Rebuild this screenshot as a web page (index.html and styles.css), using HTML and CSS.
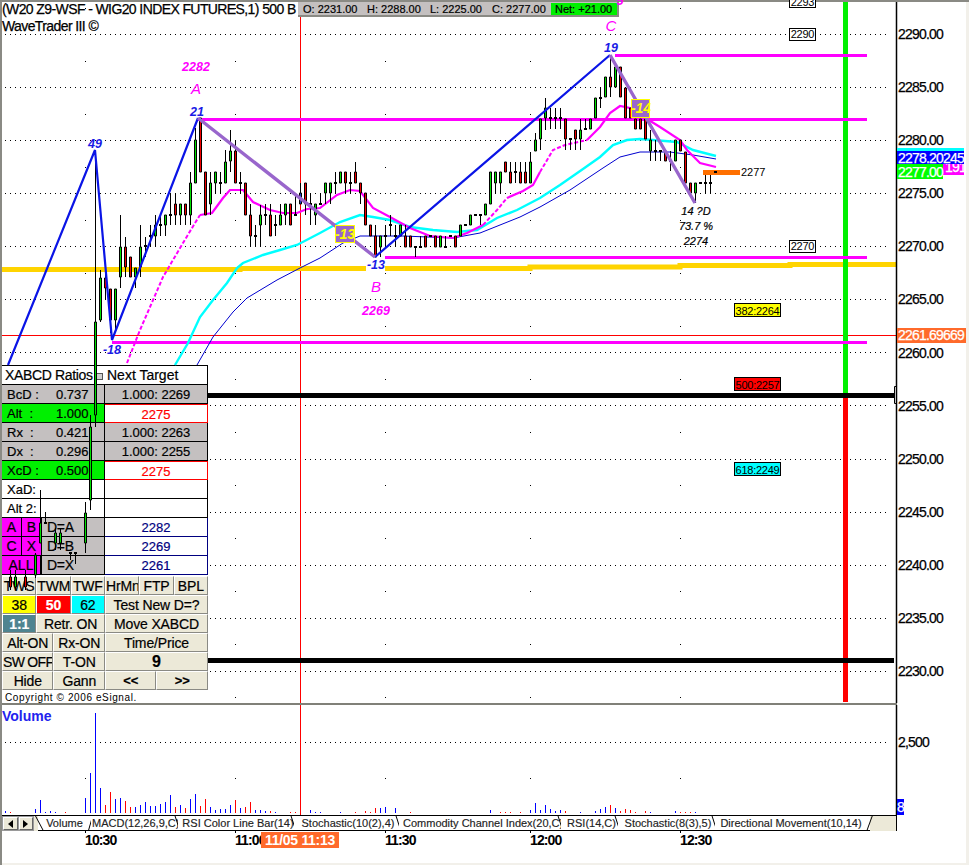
FILE: index.html
```html
<!DOCTYPE html>
<html lang="en">
<head>
<meta charset="utf-8">
<title>WaveTrader III</title>
<link rel="stylesheet" href="styles.css">
</head>
<body>
<div class="window">
  <section class="price-pane">
    <svg class="layer" width="969" height="703" viewBox="0 0 969 703">
      <path class="grid-h" d="M5 34.5H889M5 87.5H889M5 140.5H889M5 193.5H889M5 246.5H889M5 299.5H889M5 352.5H889M5 405.5H889M5 459.5H889M5 512.5H889M5 565.5H889M5 618.5H889M5 671.5H889"/>
      <path class="grid-v" d="M85.5 8V700M235.5 8V700M385.5 8V700M530.5 8V700M680.5 8V700"/>
      <path class="cross" d="M300.5 17V703M2 335.5H896"/>
      <path class="gold" d="M2 269.5H240V268.5H366M385 268.5H530V267H680V265.5H790V264.5H896"/>
      <rect class="bar-green" x="843" y="2" width="5" height="391"/>
      <rect class="bar-red" x="843" y="398" width="5" height="304"/>
      <path class="heavy" d="M208 395.5H894M208 660.5H894"/>
      <path class="bracket" d="M896 386.5H894.5V403.5H896"/>
      <path class="axis" d="M896.5 2V703"/>
    </svg>

    <div class="title">
      <div>(W20 Z9-WSF - WIG20 INDEX FUTURES,1) 500 B</div>
      <div>WaveTrader III ©</div>
    </div>

    <div class="ohlc">
      <span class="ohlc-o">O: 2231.00</span>
      <span class="ohlc-h">H: 2288.00</span>
      <span class="ohlc-l">L: 2225.00</span>
      <span class="ohlc-c">C: 2277.00</span>
      <span class="ohlc-net">Net: +21.00</span>
    </div>

    <div class="panel">
      <div class="panel-head"><span class="head-ratios">XABCD Ratios</span><span class="head-box"></span><span class="head-target">Next Target</span></div>
      <div class="ratio gray"><span class="rl">BcD :</span><span class="rv">0.737</span></div><div class="target gray">1.000: 2269</div>
      <div class="ratio green"><span class="rl">Alt&nbsp; :</span><span class="rv">1.000</span></div><div class="target alert">2275</div>
      <div class="ratio gray"><span class="rl">Rx&nbsp; :</span><span class="rv">0.421</span></div><div class="target gray">1.000: 2263</div>
      <div class="ratio gray"><span class="rl">Dx&nbsp; :</span><span class="rv">0.296</span></div><div class="target gray">1.000: 2255</div>
      <div class="ratio green"><span class="rl">XcD :</span><span class="rv">0.500</span></div><div class="target alert">2275</div>
      <div class="ratio"><span class="rl">XaD:</span></div><div class="target"></div>
      <div class="ratio"><span class="rl">Alt 2:</span></div><div class="target"></div>
      <div class="ratio point-row"><span class="pt">A</span><span class="pt">B</span><span class="pd">D=A</span></div><div class="target navy">2282</div>
      <div class="ratio point-row"><span class="pt">C</span><span class="pt">X</span><span class="pd">D=B</span></div><div class="target navy">2269</div>
      <div class="ratio point-row"><span class="pt pt-all">ALL</span><span class="pd">D=X</span></div><div class="target navy">2261</div>
      <div class="buttons">
        <button class="s2">TWS</button><button class="s2">TWM</button><button class="s2">TWF</button><button class="s2">HrMn</button><button class="s2">FTP</button><button class="s2">BPL</button>
        <button class="s2 yellow">38</button><button class="s2 red">50</button><button class="s2 cyan">62</button><button class="s6">Test New D=?</button>
        <button class="s2 teal">1:1</button><button class="s4">Retr. ON</button><button class="s6">Move XABCD</button>
        <button class="s3">Alt-ON</button><button class="s3">Rx-ON</button><button class="s6">Time/Price</button>
        <button class="s3 tight">SW OFF</button><button class="s3">T-ON</button><button class="s6 big">9</button>
        <button class="s3">Hide</button><button class="s3">Gann</button><button class="s3 nav">&lt;&lt;</button><button class="s3 nav">&gt;&gt;</button>
      </div>
      <div class="copyright">Copyright © 2006 eSignal.</div>
    </div>

    <svg class="layer layer-top" width="969" height="703" viewBox="0 0 969 703">
      <path class="mline" d="M615 55.5H867M198 119.5H867M385 257.5H867M112 342.5H867"/>
      <path class="ma-thin" d="M197 365L213 337L233 312L247 298L277 280L300 268L320 258L343 243L360 236L403 236L453 238L480 233L500 225L520 217L540 207L570 190L603 168L620 157L640 152L670 152L693 155L716 159"/>
      <path class="ma-cyan" d="M175 365L188 343L200 317L213 300L227 283L237 268L243 263L263 255L280 250L297 245L320 233L340 222L360 215L373 217L390 220L410 227L433 230L457 232L477 230L497 218L517 210L540 198L560 185L583 169L600 157L613 145L627 140L640 139L653 140L677 142L693 150L716 156"/>
      <path class="ma-dash" d="M127 363L140 330L163 277L183 243L195 223L200 215"/>
      <path class="ma-mag" d="M200 215L212 213L223 198L230 190L243 190L253 202L270 210L283 213L297 213L307 209L320 208L337 195L350 190L360 191L373 208L390 217L410 228L430 236L453 238L467 233L483 225"/>
      <path class="ma-dash" d="M483 225L497 210L507 198"/>
      <path class="ma-mag" d="M507 198L523 191L533 185L540 172"/>
      <path class="ma-dash" d="M540 172L553 150L565 145L587 140"/>
      <path class="ma-mag" d="M587 140L600 127L610 113L620 106L630 108L647 119L660 127L680 140L687 150L700 163L716 167"/>
      <path class="wick" d="M95.5 150V427M90.5 415V510M85.5 502V553M40.5 490V543M45.5 512V523M55.5 528V550M60.5 528V550M70.5 553V560M75.5 553V564M35.5 553V578M25.5 570V590M15.5 570V590M10.5 570V590M100.5 270V322M105.5 270V300M110.5 289V333M115.5 289V330M120.5 215V288M125.5 237V277M130.5 257V277M135.5 268V288M140.5 225V277M145.5 237V257M150.5 225V247M155.5 215V247M160.5 215V236M165.5 215V236M170.5 193V225M175.5 193V225M180.5 204V225M185.5 204V225M190.5 172V225M195.5 128V183M200.5 118V172M205.5 172V215M210.5 172V215M215.5 172V193M220.5 172V193M225.5 150V183M230.5 130V172M235.5 140V183M240.5 172V193M245.5 183V215M250.5 204V247M255.5 225V247M260.5 205V247M265.5 204V225M270.5 204V236M275.5 215V236M280.5 204V225M285.5 204V225M290.5 204V225M295.5 193V215M300.5 183V204M305.5 183V215M310.5 193V225M315.5 204V225M320.5 193V204M325.5 183V204M330.5 183V204M335.5 172V193M340.5 172V183M345.5 172V193M350.5 172V193M355.5 162V183M360.5 183V204M365.5 193V225M370.5 225V236M375.5 225V257M380.5 236V257M385.5 225V247M390.5 215V236M395.5 225V247M400.5 225V236M405.5 225V247M410.5 236V247M415.5 247V257M420.5 236V247M425.5 236V247M435.5 236V247M440.5 236V247M445.5 236V247M455.5 236V247M480.5 215V225M495.5 172V193M500.5 172V193M510.5 162V183M515.5 162V183M520.5 162V183M525.5 162V183M530.5 152V183M535.5 133V150M540.5 119V150M545.5 98V130M550.5 108V129M555.5 108V129M560.5 108V129M565.5 119V150M570.5 139V150M575.5 130V150M580.5 119V150M585.5 119V130M590.5 119V129M595.5 98V118M600.5 88V108M605.5 77V97M610.5 57V97M615.5 67V87M620.5 67V97M625.5 88V118M630.5 108V118M645.5 108V139M650.5 130V161M655.5 140V161M660.5 151V161M670.5 151V171M695.5 183V203M705.5 172V193M710.5 172V193"/>
      <path class="dash" d="M144 246H147M149 236H152M159 225H162M169 215H172M219 183H222M239 183H242M254 236H257M264 215H267M274 225H277M294 215H297M309 204H312M319 204H322M334 183H337M349 183H352M384 236H387M389 225H392M394 236H397M414 247H417M419 247H422M429 236H432M444 247H447M449 236H452M464 225H467M474 215H477M479 215H482M514 172H517M549 118H552M554 118H557M559 118H562M569 139H572M584 129H587M599 98H602M654 151H657M659 151H662M669 161H672M699 183H702M704 183H707M709 183H712M74 553H77M69 553H72M44 523H47"/>
      <path class="body-g" d="M94.500 322h2V415h-2zM89.500 427h2V500h-2zM84.500 513h2V543h-2zM59.500 533h2V543h-2zM54.500 533h2V543h-2zM39.500 523h2V543h-2zM34.500 555h2V575h-2zM14.500 577h2V587h-2zM99.500 278h2V320h-2zM114.500 289h2V320h-2zM119.500 247h2V277h-2zM134.500 268h2V277h-2zM139.500 247h2V267h-2zM154.500 225h2V236h-2zM164.500 215h2V225h-2zM179.500 204h2V215h-2zM189.500 183h2V215h-2zM194.500 140h2V183h-2zM209.500 183h2V204h-2zM214.500 172h2V183h-2zM224.500 162h2V183h-2zM229.500 151h2V161h-2zM259.500 215h2V225h-2zM279.500 215h2V225h-2zM284.500 204h2V215h-2zM314.500 204h2V215h-2zM324.500 183h2V193h-2zM329.500 183h2V193h-2zM339.500 172h2V183h-2zM379.500 236h2V247h-2zM399.500 225h2V236h-2zM439.500 236h2V247h-2zM459.500 225h2V236h-2zM469.500 215h2V225h-2zM484.500 204h2V215h-2zM489.500 172h2V204h-2zM494.500 172h2V183h-2zM499.500 172h2V183h-2zM529.500 162h2V183h-2zM534.500 140h2V151h-2zM539.500 119h2V139h-2zM544.500 108h2V118h-2zM579.500 130h2V139h-2zM589.500 119h2V129h-2zM594.500 98h2V118h-2zM604.500 77h2V97h-2zM614.500 67h2V87h-2zM649.500 140h2V151h-2zM674.500 140h2V161h-2zM694.500 183h2V193h-2z"/>
      <path class="body-r" d="M9.500 577h2V587h-2zM24.500 577h2V587h-2zM104.500 278h2V288h-2zM109.500 289h2V320h-2zM124.500 247h2V267h-2zM129.500 257h2V277h-2zM174.500 204h2V215h-2zM184.500 204h2V215h-2zM199.500 118h2V172h-2zM204.500 172h2V215h-2zM234.500 151h2V183h-2zM244.500 183h2V215h-2zM249.500 215h2V236h-2zM269.500 215h2V236h-2zM289.500 204h2V225h-2zM304.500 183h2V204h-2zM344.500 172h2V183h-2zM354.500 172h2V183h-2zM359.500 183h2V193h-2zM364.500 193h2V225h-2zM369.500 225h2V236h-2zM374.500 236h2V257h-2zM404.500 236h2V247h-2zM409.500 236h2V247h-2zM424.500 236h2V247h-2zM434.500 236h2V247h-2zM454.500 236h2V247h-2zM504.500 162h2V172h-2zM509.500 172h2V183h-2zM519.500 172h2V183h-2zM524.500 172h2V183h-2zM564.500 119h2V139h-2zM574.500 130h2V139h-2zM609.500 77h2V87h-2zM619.500 67h2V97h-2zM624.500 88h2V118h-2zM629.500 108h2V118h-2zM634.500 119h2V129h-2zM639.500 119h2V129h-2zM644.500 119h2V139h-2zM664.500 151h2V161h-2zM679.500 140h2V151h-2zM684.500 152h2V183h-2zM689.500 183h2V193h-2z"/>
      <path class="body-b" d="M299.500 193h2V204h-2z"/>
      <path class="zig-blue" d="M8 365L95 150L112 340L198 118M375 257L610 55"/>
      <path class="zig-purple" d="M198 118L375 257M610 55L695 203"/>
      <rect class="hit" x="335.500" y="225.500" width="19" height="17"/>
      <text class="hit-text" x="345" y="239">-13</text>
      <rect class="hit" x="631.500" y="99.500" width="18" height="18"/>
      <text class="hit-text" x="641" y="113">-14</text>
      <rect class="knock" x="366" y="261" width="19" height="15"/>
      <text class="pivot" x="95" y="148">49</text>
      <text class="pivot" x="197" y="116">21</text>
      <text class="pivot" x="112" y="354">-18</text>
      <text class="pivot" x="376" y="269">-13</text>
      <text class="pivot" x="611" y="52">19</text>
      <text class="pt-big" x="196" y="94">A</text>
      <text class="pt-val" x="196" y="71">2282</text>
      <text class="pt-big" x="376" y="292">B</text>
      <text class="pt-val" x="376" y="315">2269</text>
      <text class="pt-big" x="611" y="31">C</text>
      <text class="pt-val" x="620" y="5">5</text>
      <text class="note" x="696" y="215">14 ?D</text>
      <text class="note" x="696" y="230">73.7 %</text>
      <text class="note" x="696" y="245">2274</text>
      <rect class="cur-bar" x="703" y="170" width="37" height="5"/>
      <rect class="cur-tick" x="714" y="171" width="3" height="2"/>
      <text class="lab" x="741" y="176">2277</text>
      <rect class="tag" x="789.500" y="-4.500" width="26" height="12"/><text class="lab-c" x="802.500" y="6">2293</text>
      <rect class="tag" x="789.500" y="28.500" width="26" height="12"/><text class="lab-c" x="802.500" y="38">2290</text>
      <rect class="tag" x="789.500" y="240.500" width="26" height="12"/><text class="lab-c" x="802.500" y="250">2270</text>
      <rect class="tag tag-y" x="734.500" y="303.500" width="46" height="13"/><text class="lab-c" x="757.500" y="315">382:2264</text>
      <rect class="tag tag-r" x="734.500" y="377.500" width="46" height="13"/><text class="lab-c" x="757.500" y="389">500:2257</text>
      <rect class="tag tag-c" x="734.500" y="462.500" width="46" height="13"/><text class="lab-c" x="757.500" y="474">618:2249</text>
      <text class="ax" x="898" y="39">2290.00</text>
      <text class="ax" x="898" y="92">2285.00</text>
      <text class="ax" x="898" y="145">2280.00</text>
      <text class="ax" x="898" y="198">2275.00</text>
      <text class="ax" x="898" y="251">2270.00</text>
      <text class="ax" x="898" y="304">2265.00</text>
      <text class="ax" x="898" y="358">2260.00</text>
      <text class="ax" x="898" y="411">2255.00</text>
      <text class="ax" x="898" y="464">2250.00</text>
      <text class="ax" x="898" y="517">2245.00</text>
      <text class="ax" x="898" y="570">2240.00</text>
      <text class="ax" x="898" y="623">2235.00</text>
      <text class="ax" x="898" y="676">2230.00</text>
      <rect class="chip-cyan" x="897" y="148" width="67" height="4"/>
      <rect class="chip-mag" x="943" y="163" width="21" height="12"/>
      <text class="ax ax-w" x="945" y="172">191</text>
      <rect class="chip-blue" x="897" y="151" width="67" height="13"/>
      <text class="ax ax-w" x="898" y="163">2278.20245</text>
      <rect class="chip-green" x="897" y="164" width="46" height="15"/>
      <text class="ax ax-w" x="898" y="177">2277.00</text>
      <rect class="chip-org" x="897" y="328" width="69" height="15"/>
      <text class="ax ax-w" x="898" y="340">2261.69669</text>
    </svg>
  </section>

  <div class="divider"></div>

  <section class="volume-pane">
    <svg width="969" height="110" viewBox="0 705 969 110">
      <path class="grid-h" d="M5 742.5H889"/>
      <path class="grid-v" d="M85.500 778V779M235.500 778V779M385.500 778V779M530.500 778V779M680.500 778V779"/>
      <path class="cross" d="M300.500 705V815"/>
      <path class="axis" d="M896.500 705V815"/>
      <path class="vol-b" d="M5.500 813V811M35.500 813V809M40.500 813V800M45.500 813V812M50.500 813V811M55.500 813V812M85.500 813V798M90.500 813V773M95.500 813V713M100.500 813V788M115.500 813V799M120.500 813V798M135.500 813V807M140.500 813V805M145.500 813V802M150.500 813V806M155.500 813V806M160.500 813V804M165.500 813V802M170.500 813V795M180.500 813V805M190.500 813V799M195.500 813V794M210.500 813V807M215.500 813V810M220.500 813V809M225.500 813V809M230.500 813V805M240.500 813V808M255.500 813V810M260.500 813V810M265.500 813V811M275.500 813V812M310.500 813V810M315.500 813V812M320.500 813V812M340.500 813V812M385.500 813V807M380.500 813V808M395.500 813V808M490.500 813V810M530.500 813V810M535.500 813V803M540.500 813V810M545.500 813V805M550.500 813V809M555.500 813V811M560.500 813V810M580.500 813V812M595.500 813V811M600.500 813V809M605.500 813V807M615.500 813V808M650.500 813V812M675.500 813V811M695.500 813V812"/>
      <path class="vol-r" d="M10.500 813V812M65.500 813V812M105.500 813V805M110.500 813V792M125.500 813V801M130.500 813V807M175.500 813V807M185.500 813V808M200.500 813V806M205.500 813V799M235.500 813V800M245.500 813V807M250.500 813V802M270.500 813V811M290.500 813V812M295.500 813V812M355.500 813V812M365.500 813V811M370.500 813V812M375.500 813V808M410.500 813V812M500.500 813V812M505.500 813V812M510.500 813V812M520.500 813V812M565.500 813V811M610.500 813V805M620.500 813V811M625.500 813V809M630.500 813V810M635.500 813V812M645.500 813V811M680.500 813V812M685.500 813V812M690.500 813V812"/>
      <text class="vol-title" x="2" y="721">Volume</text>
      <text class="ax" x="898" y="747">2,500</text>
      <rect class="chip-blue" x="897" y="799" width="7" height="16"/>
      <text class="ax ax-w" x="897" y="812">8</text>
    </svg>
  </section>

  <nav class="tabbar">
    <div class="scroller">
      <span class="scroll-btn"><span class="arrow-l"></span></span>
      <span class="scroll-btn"><span class="arrow-r"></span></span>
    </div>
    <div class="tab tab-vol active">Volume</div>
    <div class="tab tab-macd">MACD(12,26,9,C)</div>
    <div class="tab tab-rsic">RSI Color Line Bar(14)</div>
    <div class="tab tab-st1">Stochastic(10(2),4)</div>
    <div class="tab tab-cci">Commodity Channel Index(20,C)</div>
    <div class="tab tab-rsi">RSI(14,C)</div>
    <div class="tab tab-st2">Stochastic(8(3),5)</div>
    <div class="tab tab-dm">Directional Movement(10,14)</div>
  </nav>

  <div class="timeline">
    <span class="time t-1030">10:30</span>
    <span class="time t-1100">11:00</span>
    <span class="time-cursor">11/05 11:13</span>
    <span class="time t-1130">11:30</span>
    <span class="time t-1200">12:00</span>
    <span class="time t-1230">12:30</span>
  </div>
</div>
</body>
</html>
```
FILE: styles.css
```css
* { box-sizing: border-box; }
html, body { margin: 0; padding: 0; background: #fff; }
body { font-family: "Liberation Sans", Arial, sans-serif; overflow: hidden; }

.window {
  position: relative;
  width: 969px;
  height: 865px;
  display: flex;
  flex-direction: column;
  background: #fff;
  box-shadow: inset 2px 2px 0 #8a8a84, inset -3px -2px 0 #f2f0ea;
}

/* ---- price pane ---- */
.price-pane { position: relative; height: 703px; flex: none; }
.layer { position: absolute; left: 0; top: 0; display: block; }
.layer-top { pointer-events: none; }

svg text { font-family: "Liberation Sans", Arial, sans-serif; }

.grid-h { stroke: #000; stroke-width: 1; stroke-dasharray: 1 4; fill: none; }
.grid-v { stroke: #000; stroke-width: 1; stroke-dasharray: 1 52; fill: none; }
.cross { stroke: #f00; stroke-width: 1; fill: none; }
.gold { stroke: #ffd400; stroke-width: 5; fill: none; }
.bar-green { fill: #00f000; }
.bar-red { fill: #f00; }
.heavy { stroke: #000; stroke-width: 5; fill: none; }
.bracket { stroke: #000; stroke-width: 1; fill: #fff; }
.axis { stroke: #000; stroke-width: 1.5; fill: none; }
.mline { stroke: #ff00ff; stroke-width: 3; fill: none; }

.ma-thin { stroke: #0000d0; stroke-width: 1; fill: none; }
.ma-cyan { stroke: #00ffff; stroke-width: 2.4; fill: none; }
.ma-mag { stroke: #ff00ff; stroke-width: 2.2; fill: none; }
.ma-dash { stroke: #ff00ff; stroke-width: 2; stroke-dasharray: 4 2; fill: none; }

.wick { stroke: #000; stroke-width: 1; fill: none; }
.dash { stroke: #000; stroke-width: 2; fill: none; }
.body-g { fill: #00e000; stroke: #000; stroke-width: 1; }
.body-r { fill: #f00000; stroke: #000; stroke-width: 1; }
.body-b { fill: #2040c0; stroke: #000; stroke-width: 1; }
.zig-blue { stroke: #0a14e6; stroke-width: 2.2; fill: none; }
.zig-purple { stroke: #9966cc; stroke-width: 3.4; fill: none; }

.hit { fill: #9966cc; stroke: #ffff00; stroke-width: 1; }
.hit-text { font-size: 14px; font-style: italic; font-weight: 700; fill: #ffff00; text-anchor: middle; }
.knock { fill: #fff; }
.pivot { font-size: 12.5px; font-style: italic; font-weight: 700; fill: #1a1ae6; text-anchor: middle; }
.pt-big { font-size: 15px; font-style: italic; fill: #ff00ff; text-anchor: middle; }
.pt-val { font-size: 12.5px; font-style: italic; font-weight: 700; fill: #ff00ff; text-anchor: middle; }
.note { font-size: 11px; font-style: italic; fill: #000; stroke: #000; stroke-width: 0.2; text-anchor: middle; }
.cur-bar { fill: #ff7000; }
.cur-tick { fill: #000; }
.lab { font-size: 11px; fill: #000; }
.lab-c { font-size: 11px; letter-spacing: -0.25px; fill: #000; text-anchor: middle; }
.tag { fill: #fff; stroke: #000; stroke-width: 1; }
.tag-y { fill: #ffff00; }
.tag-r { fill: #f00; }
.tag-c { fill: #00ffff; }

.ax { font-size: 14px; letter-spacing: -0.8px; fill: #000; stroke: #000; stroke-width: 0.25; }
.ax-w { fill: #fff; stroke: #fff; }
.chip-cyan { fill: #00ffff; }
.chip-mag { fill: #ff00ff; }
.chip-blue { fill: #0000ff; }
.chip-green { fill: #00ff00; }
.chip-org { fill: #ff6a2b; }

/* ---- title and OHLC strip ---- */
.title {
  position: absolute;
  left: 2px;
  top: 1px;
  font-size: 14px;
  line-height: 17px;
  letter-spacing: -0.6px;
  -webkit-text-stroke: 0.25px #000;
  color: #000;
  white-space: nowrap;
}
.ohlc {
  position: absolute;
  left: 298px;
  top: 2px;
  width: 321px;
  height: 15px;
  display: flex;
  align-items: center;
  background: #c4c0c0;
  border-right: 2px solid #8a8a84;
  border-bottom: 2px solid #8a8a84;
  font-size: 11px;
  -webkit-text-stroke: 0.2px #000;
  color: #000;
  white-space: nowrap;
}
.ohlc-o { margin-left: 5px; width: 64px; }
.ohlc-h { width: 63px; }
.ohlc-l { width: 62px; }
.ohlc-c { width: 59px; }
.ohlc-net {
  width: 66px;
  height: 12px;
  line-height: 12px;
  background: #00f000;
  padding-left: 4px;
}

/* ---- XABCD panel ---- */
.panel {
  position: absolute;
  left: 2px;
  top: 365px;
  width: 206px;
  height: 338px;
  display: grid;
  grid-template-columns: 103px 103px;
  grid-template-rows: 19px;
  grid-auto-rows: 19px;
  background: #fff;
  font-size: 13px;
  -webkit-text-stroke: 0.2px currentColor;
  color: #000;
  border-top: 1px solid #000;
}
.panel-head {
  grid-column: 1 / 3;
  display: flex;
  align-items: center;
  font-size: 14px;
  padding-left: 3px;
  border-bottom: 1px solid #000;
  border-right: 1px solid #000;
}
.head-ratios { width: 91px; letter-spacing: -0.35px; white-space: nowrap; }
.head-box {
  width: 7px;
  height: 7px;
  margin-top: 2px;
  border: 1px solid #555;
  background: #d0d0d0;
}
.head-target { margin-left: 4px; }
.ratio {
  display: flex;
  align-items: center;
  padding-top: 1px;
  border-bottom: 1px solid #000;
  border-right: 1px solid #000;
  padding-left: 5px;
  white-space: nowrap;
}
.rl { width: 49px; }
.rv { width: 40px; }
.gray { background: #c4c0c0; }
.green { background: #00f000; }
.target {
  display: flex;
  align-items: center;
  justify-content: center;
  padding-top: 1px;
  border-bottom: 1px solid #000;
  border-right: 1px solid #000;
}
.alert { color: #f00; border: 1px solid #f00; border-left: 0; }
.navy { color: #000080; border-bottom: 1px solid #000080; border-right: 1px solid #000080; }
.point-row { padding: 0; background: #c4c0c0; font-size: 14px; }
.pt {
  width: 20px;
  height: 100%;
  background: #ff00ff;
  border-right: 1px solid #000;
  display: flex;
  align-items: center;
  justify-content: center;
}
.pt-all { width: 40px; border-right-width: 2px; }
.pd { padding-left: 5px; letter-spacing: -0.3px; }

.buttons {
  grid-column: 1 / 3;
  grid-row: span 6;
  margin-top: 1px;
  display: grid;
  grid-template-columns: repeat(12, 1fr);
  grid-auto-rows: 19px;
  background: #8a8a84;
}
.buttons button {
  margin: 0;
  padding: 0;
  font-family: inherit;
  font-size: 14px;
  letter-spacing: -0.15px;
  -webkit-text-stroke: 0.2px currentColor;
  color: #000;
  background: #ece9d8;
  border: 1px solid;
  border-color: #fff #8a8a84 #8a8a84 #fff;
  overflow: hidden;
  white-space: nowrap;
}
.s2 { grid-column: span 2; }
.s3 { grid-column: span 3; }
.s4 { grid-column: span 4; }
.s6 { grid-column: span 6; }
.buttons .yellow { background: #ffff00; }
.buttons .red { background: #f00; color: #fff; font-weight: 700; }
.buttons .cyan { background: #00ffff; }
.buttons .teal { background: #4f8490; color: #fff; font-weight: 700; }
.buttons .big { font-weight: 700; font-size: 16px; }
.buttons .nav { font-weight: 700; font-size: 13px; }
.buttons .tight { letter-spacing: -0.7px; }
.copyright {
  grid-column: 1 / 3;
  margin-top: 2px;
  font-size: 10px;
  letter-spacing: 0.6px;
  -webkit-text-stroke: 0;
  line-height: 13px;
  padding-left: 3px;
  white-space: nowrap;
  color: #000;
}

/* ---- divider and volume ---- */
.divider {
  flex: none;
  height: 2px;
  margin-left: 2px;
  width: 895px;
  background: #808078;
}
.volume-pane { flex: none; height: 110px; overflow: hidden; }
.volume-pane svg { display: block; }
.vol-b { stroke: #0000ff; stroke-width: 1; fill: none; }
.vol-r { stroke: #ff0000; stroke-width: 1; fill: none; }
.vol-title { font-size: 14px; font-weight: 700; fill: #2222ee; }

/* ---- tabs ---- */
.tabbar {
  flex: none;
  margin-left: 2px;
  width: 895px;
  height: 16px;
  display: flex;
  align-items: stretch;
  background: #ece9d8;
  border-top: 1px solid #000;
  border-right: 1px solid #000;
  font-size: 11px;
}
.scroller {
  width: 32px;
  flex: none;
  display: flex;
  gap: 1px;
  padding: 1px;
  background: #9a9a9a;
}
.scroll-btn {
  flex: 1;
  display: flex;
  align-items: center;
  justify-content: center;
  background: #ece9d8;
  border: 1px solid;
  border-color: #fff #666 #666 #fff;
}
.arrow-l, .arrow-r { width: 0; height: 0; border: 4px solid transparent; }
.arrow-l { border-right: 5px solid #000; border-left: 0; }
.arrow-r { border-left: 5px solid #000; border-right: 0; }

.tab {
  position: relative;
  flex: none;
  background: #fff;
  border-bottom: 1px solid #000;
  text-align: center;
  line-height: 15px;
  white-space: nowrap;
  color: #222;
  -webkit-text-stroke: 0.15px #222;
}
.tab::after {
  content: "";
  position: absolute;
  right: 0;
  top: 0;
  bottom: -1px;
  width: 1px;
  background: #000;
  transform: skewX(18deg);
}
.tab-vol { width: 53px; margin-left: 4px; }
.tab-vol::before {
  content: "";
  position: absolute;
  left: 1px;
  top: 0;
  bottom: -1px;
  width: 1px;
  background: #000;
  transform: skewX(28deg);
}
.tab-vol::after { transform: skewX(-16deg); }
.tab-macd { width: 87px; padding-right: 2px; padding-left: 1px; }
.tab-rsic { width: 116px; padding-left: 4px; }
.tab-st1 { width: 105px; padding-left: 3px; }
.tab-cci { width: 162px; padding-left: 4px; }
.tab-rsi { width: 57px; padding-left: 4px; }
.tab-st2 { width: 97px; padding-left: 3px; }
.tab-dm { width: 155px; padding-right: 3px; }
.tab-dm::after { transform: skewX(-20deg); }

/* ---- time axis ---- */
.timeline {
  position: relative;
  flex: none;
  height: 20px;
  font-size: 14px;
  font-weight: 700;
  letter-spacing: -0.9px;
  color: #000;
}
.time { position: absolute; top: 1px; }
.time::before {
  content: "";
  position: absolute;
  left: 0;
  top: -1px;
  width: 1px;
  height: 2px;
  background: #000;
}
.t-1030 { left: 85px; }
.t-1100 { left: 235px; }
.t-1130 { left: 385px; }
.t-1200 { left: 530px; }
.t-1230 { left: 680px; }
.time-cursor {
  position: absolute;
  left: 261px;
  top: 1px;
  width: 78px;
  height: 16px;
  line-height: 16px;
  text-align: center;
  letter-spacing: -0.3px;
  background: #ff6a2b;
  color: #fff;
}
```
